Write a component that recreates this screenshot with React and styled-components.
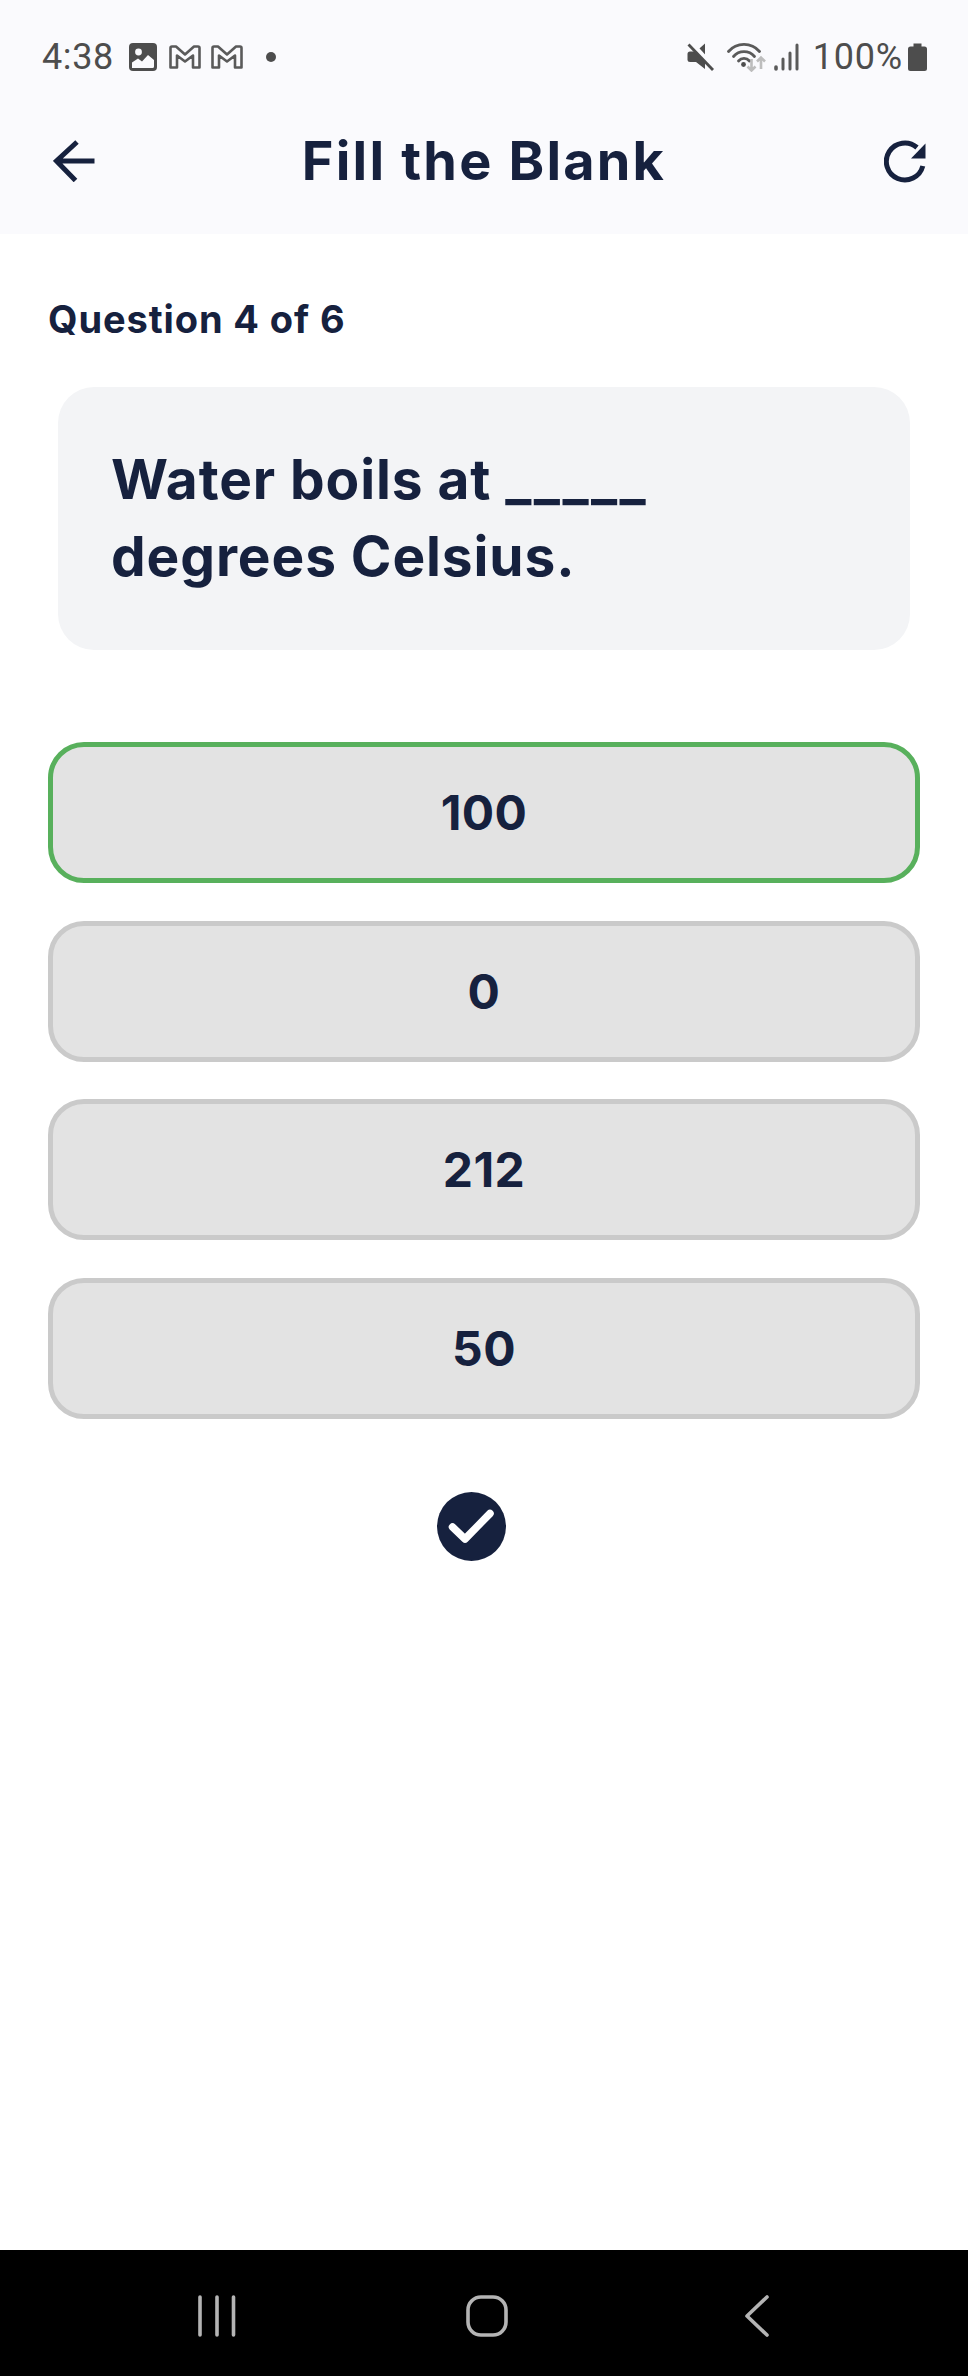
import React from 'react';
import styled, { createGlobalStyle } from 'styled-components';

const GlobalStyle = createGlobalStyle`
  html, body {
    margin: 0;
    padding: 0;
    background: #fff;
  }
  * {
    box-sizing: border-box;
  }
`;

const Page = styled.div`
  width: 968px;
  height: 2376px;
  display: flex;
  flex-direction: column;
  font-family: Inter, "Liberation Sans", sans-serif;
  color: #16213e;
  background: #fff;
`;

const Top = styled.header`
  height: 234px;
  background: #fafafd;
  display: flex;
  flex-direction: column;
`;

const StatusBar = styled.div`
  height: 113px;
  padding: 0 41px 0 42px;
  display: flex;
  align-items: center;
  justify-content: space-between;
  color: #4d4d4d;
`;

const StatusGroup = styled.div`
  display: flex;
  align-items: center;
`;

const Clock = styled.span`
  font: 400 36px/40px Roboto, sans-serif;
  letter-spacing: 0.6px;
  margin-right: 15px;
`;

const Battery = styled.span`
  font: 400 36px/40px Roboto, sans-serif;
  letter-spacing: 0.8px;
  margin: 0 5px 0 14px;
`;

const Icon = styled.svg`
  display: block;
  flex: none;
  margin-left: ${(p) => p.$left || 0}px;
`;

const TitleBar = styled.div`
  flex: 1;
  padding: 0 42px 26px 53px;
  display: grid;
  grid-template-columns: 1fr auto 1fr;
  align-items: center;
`;

const RightCell = styled.div`
  display: flex;
  justify-content: flex-end;
`;

const Title = styled.h1`
  margin: 0 0 0 -11px;
  font-size: 54px;
  line-height: 60px;
  font-weight: 700;
  letter-spacing: 2.2px;
`;

const Main = styled.main`
  flex: 1;
  padding: 65px 48px 0;
  display: flex;
  flex-direction: column;
`;

const Progress = styled.div`
  font-size: 38px;
  line-height: 40px;
  font-weight: 700;
  letter-spacing: 0.9px;
`;

const QuestionCard = styled.div`
  margin: 48px 10px 0;
  height: 263px;
  padding: 0 53px 2px;
  border-radius: 36px;
  background: #f3f4f6;
  font-size: 55px;
  line-height: 77px;
  font-weight: 700;
  letter-spacing: 0.9px;
  display: flex;
  align-items: center;
`;

const Blank = styled.span`
  letter-spacing: 2.4px;
`;

const Options = styled.div`
  margin-top: 92px;
  display: flex;
  flex-direction: column;
  gap: 37.7px;
`;

const Option = styled.button`
  height: 141px;
  padding: 0;
  border: 5.5px solid ${(p) => (p.$selected ? '#58b05c' : '#cacaca')};
  border-radius: 36px;
  background: #e3e3e3;
  color: inherit;
  font-family: inherit;
  font-size: 48px;
  font-weight: 700;
  letter-spacing: 0.4px;
`;

const CheckRow = styled.div`
  margin-top: 73px;
  padding-right: 26px;
  display: flex;
  justify-content: center;
`;

const NavBar = styled.nav`
  height: 126px;
  background: #000;
  padding: 6px 0 0 82px;
  display: grid;
  grid-template-columns: repeat(3, 270px);
  align-items: center;
  justify-items: center;
`;

const ImageIcon = () => (
  <Icon width="28" height="28" viewBox="0 0 28 28">
    <rect width="28" height="28" rx="4" fill="#4d4d4d" />
    <circle cx="9.5" cy="9" r="3.4" fill="#fafafd" />
    <path d="M3 25V19.5L9 15.5L13 18.5L19 12L25 17V23.5Q25 25 23.5 25Z" fill="#fafafd" />
  </Icon>
);

const MailIcon = ({ left }) => (
  <Icon $left={left} width="32" height="24" viewBox="0 0 32 24">
    <path
      d="M1.5 22.5V3Q1.5 1.5 3 1.5H7L16 9.5L25 1.5H29Q30.5 1.5 30.5 3V22.5H24V10.5L16 16.5L8 10.5V22.5Z"
      fill="none"
      stroke="#5a5a5a"
      strokeWidth="2.6"
      strokeLinejoin="round"
    />
  </Icon>
);

const MuteIcon = () => (
  <Icon width="27" height="28" viewBox="0 0 27 28">
    <path d="M18 0.5V26L9 19H3Q0.5 19 0.5 17V11Q0.5 8.5 3 8.5H9Z" fill="#4d4d4d" />
    <path d="M4.5 0L27 24.5" stroke="#fafafd" strokeWidth="4.5" />
    <path d="M1.5 1.5L26 27" stroke="#4d4d4d" strokeWidth="2.8" />
  </Icon>
);

const WifiIcon = () => (
  <Icon $left={13} width="39" height="30" viewBox="0 0 39 30">
    <g fill="none" stroke="#5a5a5a" strokeWidth="2.8" strokeLinecap="round">
      <path d="M1.5 9.5C9.5 0 24.5 0 32.5 9.5" />
      <path d="M6.5 14.5C12 8 22 8 27.5 14.5" />
      <path d="M11.5 19C14.5 15.5 19.5 15.5 22.5 19" />
    </g>
    <circle cx="16.5" cy="22.5" r="2.4" fill="#4d4d4d" />
    <g fill="none" stroke="#bdbdbd" strokeWidth="2.6">
      <path d="M24.5 17V28.5M20.5 24.5L24.5 28.5L28.5 24.5" />
      <path d="M34 27V15.5M30 19.5L34 15.5L38 19.5" />
    </g>
  </Icon>
);

const SignalIcon = () => (
  <Icon $left={8} width="25" height="28" viewBox="0 0 25 28">
    <g stroke="#5a5a5a" strokeLinecap="round">
      <path d="M2 24V26" strokeWidth="3.6" />
      <path d="M9 16V26" strokeWidth="3" />
      <path d="M16 10V26" strokeWidth="3" />
      <path d="M23 2V26" strokeWidth="3" />
    </g>
  </Icon>
);

const BatteryIcon = () => (
  <Icon width="19" height="28" viewBox="0 0 19 28">
    <path d="M5.5 0.5H13.5V3.5H16.5Q19 3.5 19 6V25.5Q19 28 16.5 28H2.5Q0 28 0 25.5V6Q0 3.5 2.5 3.5H5.5Z" fill="#4d4d4d" />
  </Icon>
);

const BackIcon = () => (
  <Icon width="42" height="42" viewBox="0 0 42 42">
    <path
      d="M41.5 21H3.5M24 2L3.5 21L22.5 40.5"
      fill="none"
      stroke="#16213e"
      strokeWidth="5"
    />
  </Icon>
);

const RefreshIcon = () => (
  <Icon width="42" height="44" viewBox="0 0 42 44">
    <path
      d="M33 8.5A18.5 18.5 0 1 0 38.8 27"
      fill="none"
      stroke="#16213e"
      strokeWidth="5"
    />
    <path d="M41.5 4.5V19.5H27Z" fill="#16213e" />
  </Icon>
);

const CheckIcon = () => (
  <Icon width="69" height="69" viewBox="0 0 69 69">
    <circle cx="34.5" cy="34.5" r="34.5" fill="#16213e" />
    <path
      d="M15.5 35L28 47L53 21.5"
      fill="none"
      stroke="#fff"
      strokeWidth="7.5"
      strokeLinecap="round"
      strokeLinejoin="round"
    />
  </Icon>
);

const RecentsIcon = () => (
  <Icon width="38" height="42" viewBox="0 0 38 42">
    <path
      d="M2 2V40M19 2V40M35.5 2V40"
      stroke="#b4b4b4"
      strokeWidth="3.6"
      strokeLinecap="round"
    />
  </Icon>
);

const HomeIcon = () => (
  <Icon width="42" height="42" viewBox="0 0 42 42">
    <rect x="2" y="2" width="38" height="38" rx="13" fill="none" stroke="#b4b4b4" strokeWidth="3.6" />
  </Icon>
);

const NavBackIcon = () => (
  <Icon width="24" height="42" viewBox="0 0 24 42">
    <path
      d="M22 2L2 21L22 40"
      fill="none"
      stroke="#b4b4b4"
      strokeWidth="3.6"
      strokeLinecap="round"
      strokeLinejoin="round"
    />
  </Icon>
);

const options = ['100', '0', '212', '50'];

export default function App() {
  return (
    <Page>
      <GlobalStyle />
      <Top>
        <StatusBar>
          <StatusGroup>
            <Clock>4:38</Clock>
            <ImageIcon />
            <MailIcon left={12} />
            <MailIcon left={10} />
            <Icon $left={23} width="10" height="10" viewBox="0 0 10 10">
              <circle cx="5" cy="5" r="5" fill="#4d4d4d" />
            </Icon>
          </StatusGroup>
          <StatusGroup>
            <MuteIcon />
            <WifiIcon />
            <SignalIcon />
            <Battery>100%</Battery>
            <BatteryIcon />
          </StatusGroup>
        </StatusBar>
        <TitleBar>
          <BackIcon />
          <Title>Fill the Blank</Title>
          <RightCell>
            <RefreshIcon />
          </RightCell>
        </TitleBar>
      </Top>
      <Main>
        <Progress>Question 4 of 6</Progress>
        <QuestionCard>
          <div>
            Water boils at <Blank>_____</Blank> degrees Celsius.
          </div>
        </QuestionCard>
        <Options>
          {options.map((option, index) => (
            <Option key={option} $selected={index === 0}>
              {option}
            </Option>
          ))}
        </Options>
        <CheckRow>
          <CheckIcon />
        </CheckRow>
      </Main>
      <NavBar>
        <RecentsIcon />
        <HomeIcon />
        <NavBackIcon />
      </NavBar>
    </Page>
  );
}
